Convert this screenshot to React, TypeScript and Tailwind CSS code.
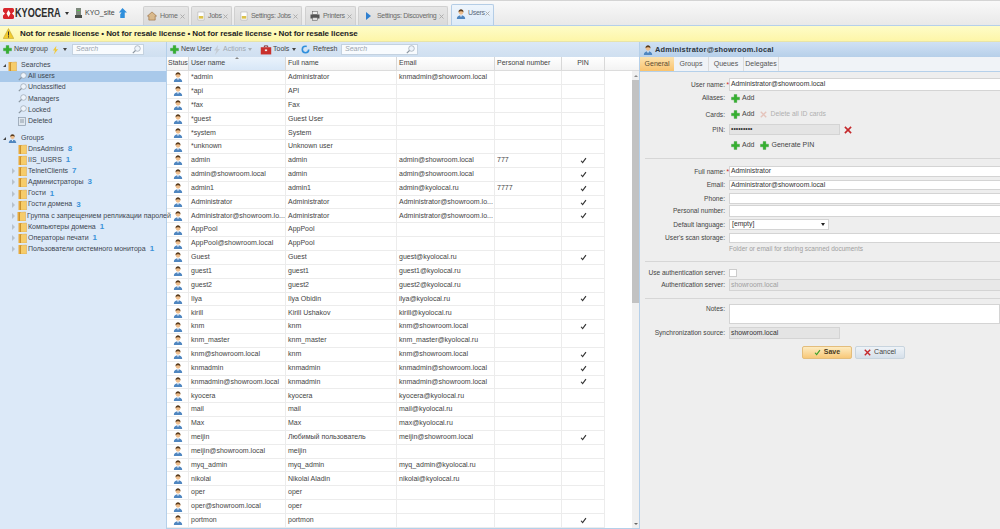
import React from "react";

const F = { fontFamily: '"Liberation Sans", Arial, sans-serif' };

type R = [string, string, string, string, boolean];
const rows: R[] = [
  ["*admin", "Administrator", "knmadmin@showroom.local", "", false],
  ["*api", "API", "", "", false],
  ["*fax", "Fax", "", "", false],
  ["*guest", "Guest User", "", "", false],
  ["*system", "System", "", "", false],
  ["*unknown", "Unknown user", "", "", false],
  ["admin", "admin", "admin@showroom.local", "777", true],
  ["admin@showroom.local", "admin", "admin@showroom.local", "", true],
  ["admin1", "admin1", "admin@kyolocal.ru", "7777", true],
  ["Administrator", "Administrator", "Administrator@showroom.lo...", "", true],
  ["Administrator@showroom.lo...", "Administrator", "Administrator@showroom.lo...", "", true],
  ["AppPool", "AppPool", "", "", false],
  ["AppPool@showroom.local", "AppPool", "", "", false],
  ["Guest", "Guest", "guest@kyolocal.ru", "", true],
  ["guest1", "guest1", "guest1@kyolocal.ru", "", false],
  ["guest2", "guest2", "guest2@kyolocal.ru", "", false],
  ["Ilya", "Ilya Obidin", "ilya@kyolocal.ru", "", true],
  ["kirill", "Kirill Ushakov", "kirill@kyolocal.ru", "", false],
  ["knm", "knm", "knm@showroom.local", "", true],
  ["knm_master", "knm_master", "knm_master@kyolocal.ru", "", false],
  ["knm@showroom.local", "knm", "knm@showroom.local", "", true],
  ["knmadmin", "knmadmin", "knmadmin@showroom.local", "", true],
  ["knmadmin@showroom.local", "knmadmin", "knmadmin@showroom.local", "", true],
  ["kyocera", "kyocera", "kyocera@kyolocal.ru", "", false],
  ["mail", "mail", "mail@kyolocal.ru", "", false],
  ["Max", "Max", "max@kyolocal.ru", "", false],
  ["meijin", "Любимый пользователь", "meijin@showroom.local", "", true],
  ["meijin@showroom.local", "meijin", "", "", false],
  ["myq_admin", "myq_admin", "myq_admin@kyolocal.ru", "", false],
  ["nikolai", "Nikolai Aladin", "nikolai@kyolocal.ru", "", false],
  ["oper", "oper", "", "", false],
  ["oper@showroom.local", "oper", "", "", false],
  ["portmon", "portmon", "", "", true],
];

const UserIcon = ({ s = 10 }: { s?: number }) => (
  <svg width={s} height={s} viewBox="0 0 12 12" className="shrink-0">
    <path d="M1 12c0-3 2-4.500 5-4.500s5 1.500 5 4.500z" fill="#4f86c0" />
    <path d="M4.800 7.500 6 10l1.200-2.500z" fill="#fff" />
    <circle cx="6" cy="4" r="2.800" fill="#eebd8c" />
    <path d="M3 4c0-3 1.500-3.800 3-3.800S9 1 9 4C8 2.800 7 2.700 6 2.700S4 2.800 3 4z" fill="#5a3b1c" />
  </svg>
);

const Plus = ({ s = 9 }: { s?: number }) => (
  <svg width={s} height={s} viewBox="0 0 10 10" className="shrink-0">
    <path d="M3.500 0.500h3v3h3v3h-3v3h-3v-3h-3v-3h3z" fill="#35b02f" stroke="#1f8a1d" strokeWidth="0.3" />
  </svg>
);

const Folder = () => (
  <svg width="9" height="10" viewBox="0 0 9 10" className="shrink-0">
    <path d="M0.500 1h3.500v9H0.500z" fill="#e8a93a" />
    <path d="M2.500 1.500 8.500 1v9H2.500z" fill="#f6cc6a" stroke="#d69a32" strokeWidth="0.4" />
    <path d="M2.500 1.500v8.500" stroke="#b67f22" strokeWidth="0.6" />
  </svg>
);

const Lens = () => (
  <svg width="9" height="9" viewBox="0 0 9 9" className="shrink-0">
    <circle cx="5.500" cy="3.500" r="2.800" fill="#eef4fb" stroke="#98a4b0" strokeWidth="0.7" />
    <path d="M3.500 5.500 0.800 8.200" stroke="#8a95a0" strokeWidth="1.100" />
  </svg>
);

const RedX = ({ s = 8, c = "#c5282b" }: { s?: number; c?: string }) => (
  <svg width={s} height={s} viewBox="0 0 9 9" className="shrink-0">
    <path d="M1 1 8 8M8 1 1 8" stroke={c} strokeWidth="1.800" />
  </svg>
);

const Check = ({ c = "#333" }: { c?: string }) => (
  <svg width="7" height="7" viewBox="0 0 8 8">
    <path d="M1.200 4.300 3 6.500 6.800 1.200" fill="none" stroke={c} strokeWidth="1.300" />
  </svg>
);

const X = ({ pos }: { pos: string }) => (
  <svg width="5" height="5" viewBox="0 0 5 5" className={`absolute ${pos}`}>
    <path d="M0.500 0.500l4 4M4.500 0.500l-4 4" stroke="#a8a8a8" strokeWidth="0.9" />
  </svg>
);

const Tab = ({ cls, icon, label, active }: { cls: string; icon: React.ReactNode; label: string; active?: boolean }) => (
  <div
    className={
      active
        ? `${cls} h-[21px] relative flex items-center gap-[2px] bg-gradient-to-b from-[#eef5fc] to-[#dceaf8] border border-b-0 border-[#b4cde6] rounded-t-[2px] text-[7px] tracking-[-0.3px] text-[#5a6a7a]`
        : `${cls} h-[19px] relative flex items-center gap-[2px] bg-gradient-to-b from-[#e6e6e6] to-[#dadada] border border-b-0 border-[#d0d0d0] rounded-t-[2px] text-[7px] tracking-[-0.3px] text-[#6a6a6a]`
    }
  >
    {icon}
    <span className="whitespace-nowrap">{label}</span>
    <X pos={active ? "right-[3px] top-[6px]" : "right-[3px] top-[7px]"} />
  </div>
);

const Search = ({ w }: { w: string }) => (
  <div className={`${w} h-[11px] bg-[#f8fbfe] border border-[#c4d2e0] flex items-center justify-between pl-[3px] pr-[2px] text-[7px] italic text-[#9aa4ae]`}>
    <span>Search</span>
    <Lens />
  </div>
);

const TreeItem = ({ label, n, arrow, selected, icon }: { label: string; n?: string; arrow?: boolean; selected?: boolean; icon: React.ReactNode }) => (
  <div className={`h-[11.100px] flex items-center pl-[17px] relative whitespace-nowrap ${selected ? "bg-[#a9c9ea]" : ""}`}>
    {arrow && <span className="absolute left-[12px] w-0 h-0 border-y-[3px] border-y-transparent border-l-[3px] border-l-[#b8c2cc]" />}
    <span className="w-[10px] flex justify-center">{icon}</span>
    <span className="ml-[1px] text-[7px] text-[#3c4650]">{label}</span>
    {n && <span className="ml-[4px] text-[8px] font-bold text-[#3b93d8]">{n}</span>}
  </div>
);

const Label = ({ text, req }: { text: string; req?: boolean }) => (
  <div className="w-[85px] shrink-0 text-right text-[6.600px] text-[#444] whitespace-nowrap relative">
    {text}
    {req && <span className="absolute right-[-4px] top-0 text-[#c22]">*</span>}
  </div>
);

const Input = ({ w = "w-[272px]", v = "", bg = "bg-white", c = "text-[#333]" }: { w?: string; v?: string; bg?: string; c?: string }) => (
  <div className={`${w} h-full ${bg} ${c} border border-[#d4d4d4] flex items-center pl-[1px] text-[6.800px] whitespace-nowrap`}>{v}</div>
);

const FormRow = ({ h, mt = "", label, req, children }: { h: string; mt?: string; label?: string; req?: boolean; children?: React.ReactNode }) => (
  <div className={`${h} ${mt} flex items-center gap-[4px]`}>
    <Label text={label ?? ""} req={req} />
    <div className="h-full flex items-center gap-[3px] flex-1">{children}</div>
  </div>
);

const Add = ({ label = "Add" }: { label?: string }) => (
  <div className="flex items-center gap-[2px] ml-[2px] text-[7px] text-[#444]">
    <Plus />
    <span>{label}</span>
  </div>
);

const Divider = ({ mt }: { mt: string }) => <div className={`${mt} h-px bg-[#d6d6d6] ml-[5px]`} />;

const cell = "h-full shrink-0 border-r border-[#ececec] flex items-center text-[7px] text-[#444] whitespace-nowrap overflow-hidden";
const head = "h-full shrink-0 border-r border-[#d8d8d8] flex items-center text-[7px] text-[#444] whitespace-nowrap";

export default function App() {
  return (
    <div style={F} className="w-[1000px] h-[529px] overflow-hidden bg-white flex flex-col relative">
      <div className="h-[26px] shrink-0 bg-gradient-to-b from-[#f9f9f9] to-[#e9e9e9] border-t border-t-[#d4d4d4] border-b border-b-[#b5d0ea] flex items-end">
        <div className="w-[143px] h-full flex items-center shrink-0 pl-[3px]">
          <svg width="11" height="11" viewBox="0 0 11 11" className="shrink-0">
            <rect x="0" y="0" width="11" height="11" rx="1.500" fill="#d8262c" />
            <path d="M5.500 2 7.500 5.500 5.500 9 3.500 5.500zM0 3.500 2 5.500 0 7.500zM11 3.500 9 5.500 11 7.500z" fill="#fff" />
          </svg>
          <span className="ml-[1px] w-[47px] inline-block origin-left scale-x-[0.76] text-[12px] text-[#2d2d2d] font-bold whitespace-nowrap">KYOCERA</span>
          <span className="ml-[3px] w-0 h-0 border-x-[2px] border-x-transparent border-t-[3px] border-t-[#333]" />
          <svg width="7" height="10" viewBox="0 0 7 10" className="ml-[6px] shrink-0">
            <rect x="1" y="0" width="5" height="7" fill="#7f8a7e" />
            <rect x="0" y="7" width="7" height="3" fill="#4a4f4a" />
            <rect x="2" y="2" width="3" height="1" fill="#58c04e" />
          </svg>
          <span className="ml-[3px] text-[7px] text-[#444] w-[28px] whitespace-nowrap">KYO_site</span>
          <svg width="9" height="10" viewBox="0 0 10 11" className="ml-[5px] shrink-0">
            <path d="M5 0 10 5H7.500v6h-5V7L4 5H1z" fill="#2f8fdc" />
          </svg>
        </div>
        <div className="flex items-end">
          <Tab cls="w-[46px] pl-[3px]" label="Home" icon={<svg width="10" height="10" viewBox="0 0 11 11" className="mr-[1px]"><path d="M0.500 5.500 5.500 1l5 4.500H9V10H2V5.500z" fill="#d9b98c" stroke="#9a6b3a" strokeWidth="0.7" /></svg>} />
          <Tab cls="w-[41px] ml-[2px] pl-[5px]" label="Jobs" icon={<svg width="8" height="10" viewBox="0 0 9 10" className="mr-[1px]"><path d="M1 0.500h7v9H1z" fill="#fff" stroke="#aaa" strokeWidth="0.6" /><path d="M2 5h5v3H2z" fill="#dcc24a" /></svg>} />
          <Tab cls="w-[68px] ml-[2px] pl-[5px]" label="Settings: Jobs" icon={<svg width="8" height="10" viewBox="0 0 9 10" className="mr-[1px]"><path d="M1 0.500h7v9H1z" fill="#fff" stroke="#aaa" strokeWidth="0.6" /><path d="M2 5h5v3H2z" fill="#dcc24a" /></svg>} />
          <Tab cls="w-[51px] ml-[3px] pl-[4px]" label="Printers" icon={<svg width="10" height="10" viewBox="0 0 10 10" className="mr-[1px]"><rect x="2.500" y="0.500" width="5" height="3" fill="#eee" stroke="#555" strokeWidth="0.5" /><rect x="0.500" y="3.500" width="9" height="4" fill="#555" /><rect x="2.500" y="6.500" width="5" height="3" fill="#ddd" stroke="#555" strokeWidth="0.5" /></svg>} />
          <Tab cls="w-[90px] ml-[2px] pl-[4px]" label="Settings: Discovering" icon={<svg width="10" height="10" viewBox="0 0 10 10" className="mr-[2px]"><path d="M3 1 8 5 3 9z" fill="#2e7fd0" /></svg>} />
          <Tab cls="w-[43px] ml-[3px] pl-[4px] pb-[3px]" active label="Users" icon={<UserIcon />} />
        </div>
      </div>

      <div className="h-[16px] shrink-0 bg-gradient-to-b from-[#fefcc8] to-[#fdf6a8] flex items-center pl-[3px] border-b border-b-[#e8e4a8]">
        <svg width="11" height="11" viewBox="0 0 11 11" className="shrink-0">
          <path d="M5.500 0.500 10.800 10.500H0.200z" fill="#f3cc2e" stroke="#b49a2a" strokeWidth="0.5" />
          <path d="M5.500 3.500v4M5.500 8.300v1.200" stroke="#333" strokeWidth="1" />
        </svg>
        <span className="ml-[6px] text-[8px] tracking-[-0.08px] font-bold text-[#222] whitespace-nowrap">
          Not for resale license • Not for resale license • Not for resale license • Not for resale license
        </span>
      </div>

      <div className="flex-1 flex min-h-0">
        <div className="w-[166px] shrink-0 bg-[#dce9f8] flex flex-col">
          <div className="h-[15px] shrink-0 bg-gradient-to-b from-[#dbe8f6] to-[#cfdff0] flex items-center pl-[3px] text-[7px] text-[#444]">
            <Plus />
            <span className="ml-[2px] w-[33px] whitespace-nowrap">New group</span>
            <svg width="7" height="10" viewBox="0 0 8 10" className="ml-[5px] shrink-0"><path d="M5 0 1 5.500h2.500L2 10l5-6H4.500z" fill="#f0c93a" /></svg>
            <span className="ml-[4px] w-0 h-0 border-x-[2px] border-x-transparent border-t-[3px] border-t-[#444]" />
            <div className="ml-[5px]"><Search w="w-[72px]" /></div>
          </div>
          <div className="h-[3px] shrink-0" />
          <div className="h-[11.100px] flex items-center pl-[3px] text-[7px] text-[#3c4650]">
            <span className="w-0 h-0 border-l-[3px] border-l-transparent border-b-[3px] border-b-[#444]" />
            <span className="ml-[2px]"><Folder /></span>
            <span className="ml-[4px]">Searches</span>
          </div>
          <TreeItem label="All users" selected icon={<Lens />} />
          <TreeItem label="Unclassified" icon={<Lens />} />
          <TreeItem label="Managers" icon={<Lens />} />
          <TreeItem label="Locked" icon={<Lens />} />
          <TreeItem label="Deleted" icon={<svg width="8" height="9" viewBox="0 0 8 9"><rect x="0.500" y="0.500" width="7" height="8" fill="#dfe7ef" stroke="#8a99a8" strokeWidth="0.7" /><path d="M2 3h4M2 5h4" stroke="#6d7c8a" strokeWidth="0.7" /></svg>} />
          <div className="h-[6px] shrink-0" />
          <div className="h-[11.100px] flex items-center pl-[3px] text-[7px] text-[#3c4650]">
            <span className="w-0 h-0 border-l-[3px] border-l-transparent border-b-[3px] border-b-[#444]" />
            <span className="ml-[2px] mr-[1px] flex"><UserIcon s={9} /></span>
            <span className="ml-[3px]">Groups</span>
          </div>
          <TreeItem label="DnsAdmins" n="8" icon={<Folder />} />
          <TreeItem label="IIS_IUSRS" n="1" icon={<Folder />} />
          <TreeItem label="TelnetClients" n="7" arrow icon={<Folder />} />
          <TreeItem label="Администраторы" n="3" arrow icon={<Folder />} />
          <TreeItem label="Гости" n="1" arrow icon={<Folder />} />
          <TreeItem label="Гости домена" n="3" arrow icon={<Folder />} />
          <TreeItem label="Группа с запрещением репликации паролей" arrow icon={<Folder />} />
          <TreeItem label="Компьютеры домена" n="1" arrow icon={<Folder />} />
          <TreeItem label="Операторы печати" n="1" arrow icon={<Folder />} />
          <TreeItem label="Пользователи системного монитора" n="1" arrow icon={<Folder />} />
        </div>

        <div className="w-px shrink-0 bg-[#b5d0ea]" />

        <div className="w-[472px] shrink-0 flex flex-col bg-white border-b border-b-[#b5d0ea]">
          <div className="h-[15px] shrink-0 bg-gradient-to-b from-[#dbe8f6] to-[#cfdff0] flex items-center pl-[3px] text-[7px] text-[#444]">
            <Plus />
            <span className="ml-[2px] w-[29px] whitespace-nowrap">New User</span>
            <svg width="8" height="10" viewBox="0 0 8 10" className="ml-[3px] shrink-0"><path d="M5 0 1 5.500h2.500L2 10l5-6H4.500z" fill="#c4ccd4" /></svg>
            <span className="ml-[2px] text-[#a0a8b0] w-[24px] whitespace-nowrap">Actions</span>
            <span className="ml-[1px] w-0 h-0 border-x-[2px] border-x-transparent border-t-[3px] border-t-[#a8b0b8]" />
            <svg width="12" height="10" viewBox="0 0 10 9" className="ml-[8px] shrink-0"><path d="M3.500 2V0.800h3V2" fill="none" stroke="#7a2020" strokeWidth="0.8" /><rect x="0.300" y="2" width="9.400" height="6.500" fill="#c9302c" /><rect x="4" y="4" width="2" height="1.500" fill="#eee" /></svg>
            <span className="ml-[1px] w-[16px]">Tools</span>
            <span className="ml-[3px] w-0 h-0 border-x-[2px] border-x-transparent border-t-[3px] border-t-[#444]" />
            <svg width="9" height="9" viewBox="0 0 9 9" className="ml-[5px] shrink-0"><circle cx="4.500" cy="4.500" r="3.200" fill="none" stroke="#2f8fdc" strokeWidth="1.600" strokeDasharray="16 4" /></svg>
            <span className="ml-[3px] w-[22px]">Refresh</span>
            <div className="ml-[6px]"><Search w="w-[77px]" /></div>
          </div>
          <div className="h-[14px] shrink-0 flex bg-gradient-to-b from-white to-[#f3f3f3] border-b border-b-[#dcdcdc]">
            <div className={`${head} w-[22px] pl-[1px] overflow-hidden`}>Status</div>
            <div className={`${head} w-[97px] pl-[2px] bg-gradient-to-b from-[#eaf3fc] to-[#d8e7f7] relative`}>
              User name
              <span className="absolute left-[46px] top-0 w-0 h-0 border-x-[2px] border-x-transparent border-b-[2px] border-b-[#888]" />
            </div>
            <div className={`${head} w-[111px] pl-[2px]`}>Full name</div>
            <div className={`${head} w-[98px] pl-[2px]`}>Email</div>
            <div className={`${head} w-[67px] pl-[2px]`}>Personal number</div>
            <div className={`${head} w-[43px] justify-center`}>PIN</div>
          </div>
          <div className="flex-1 flex min-h-0">
            <div className="w-[465px] shrink-0 overflow-hidden">
              {rows.map((r) => (
                <div key={r[0]} className="h-[13.850px] flex border-b border-b-[#ececec] w-[438px]">
                  <div className={`${cell} w-[22px] justify-center`}><UserIcon /></div>
                  <div className={`${cell} w-[97px] pl-[2px]`}>{r[0]}</div>
                  <div className={`${cell} w-[111px] pl-[2px]`}>{r[1]}</div>
                  <div className={`${cell} w-[98px] pl-[2px]`}>{r[2]}</div>
                  <div className={`${cell} w-[67px] pl-[2px]`}>{r[3]}</div>
                  <div className={`${cell} w-[43px] justify-center`}>{r[4] && <Check />}</div>
                </div>
              ))}
            </div>
            <div className="w-[7px] shrink-0 bg-[#f0f0f0] flex flex-col items-center">
              <span className="mt-[4px] w-0 h-0 border-x-[2px] border-x-transparent border-b-[2px] border-b-[#888]" />
              <div className="mt-[3px] w-full h-[223px] bg-[#c2c2c2]" />
              <span className="mt-auto mb-[3px] w-0 h-0 border-x-[2px] border-x-transparent border-t-[2px] border-t-[#666]" />
            </div>
          </div>
        </div>

        <div className="w-px shrink-0 bg-[#b5d0ea]" />

        <div className="flex-1 bg-[#eeeeee] flex flex-col min-w-0">
          <div className="h-[15px] shrink-0 bg-gradient-to-b from-[#d0e1f3] via-[#c3d8ef] to-[#b6cfe9] flex items-center pl-[3px]">
            <UserIcon />
            <span className="ml-[2px] text-[7.400px] font-bold text-[#2c3540] tracking-[0.25px] whitespace-nowrap">Administrator@showroom.local</span>
          </div>
          <div className="h-[15px] shrink-0 flex bg-[#f0f3f7] border-b border-b-[#b5d0ea] text-[7px] text-[#555]">
            <div className="w-[34px] h-full flex items-center justify-center bg-gradient-to-b from-[#fde3ae] to-[#f9c36e] text-[#5a4a30]">General</div>
            <div className="w-[35px] h-full flex items-center justify-center border-r border-[#dcdcdc]">Groups</div>
            <div className="w-[35px] h-full flex items-center justify-center border-r border-[#dcdcdc]">Queues</div>
            <div className="w-[35px] h-full flex items-center justify-center border-r border-[#dcdcdc]">Delegates</div>
          </div>
          <div className="flex flex-col pt-[6px]">
            <FormRow h="h-[13px]" label="User name:" req><Input v="Administrator@showroom.local" /></FormRow>
            <FormRow h="h-[14px]" label="Aliases:"><Add /></FormRow>
            <FormRow h="h-[19px]" label="Cards:">
              <Add />
              <div className="flex items-center gap-[3px] ml-[3px] text-[6.800px] text-[#b0b0b0] whitespace-nowrap"><RedX s={7} c="#e5c4bc" /><span>Delete all ID cards</span></div>
            </FormRow>
            <FormRow h="h-[11px]" label="PIN:">
              <Input w="w-[111px]" bg="bg-[#e4e4e4]" v="•••••••••" />
              <span className="ml-[1px]"><RedX /></span>
            </FormRow>
            <FormRow h="h-[20px]">
              <Add />
              <span className="ml-[1px]"><Add label="Generate PIN" /></span>
            </FormRow>
            <Divider mt="mt-[3px]" />
            <FormRow h="h-[11px]" mt="mt-[7px]" label="Full name:" req><Input v="Administrator" /></FormRow>
            <FormRow h="h-[10px]" mt="mt-[3px]" label="Email:"><Input v="Administrator@showroom.local" /></FormRow>
            <FormRow h="h-[11px]" mt="mt-[3px]" label="Phone:"><Input /></FormRow>
            <FormRow h="h-[12px]" mt="mt-[1px]" label="Personal number:"><Input /></FormRow>
            <FormRow h="h-[11px]" mt="mt-[2px]" label="Default language:">
              <div className="w-[100px] h-full bg-white border border-[#d4d4d4] flex items-center justify-between pl-[2px] pr-[3px] text-[6.800px] text-[#333]">
                <span>[empty]</span>
                <span className="w-0 h-0 border-x-[2px] border-x-transparent border-t-[3px] border-t-[#222]" />
              </div>
            </FormRow>
            <FormRow h="h-[10px]" mt="mt-[3px]" label="User's scan storage:"><Input /></FormRow>
            <div className="h-[12px] flex items-center pl-[89px] text-[6.500px] text-[#a0a0a0] whitespace-nowrap">Folder or email for storing scanned documents</div>
            <Divider mt="mt-[6px]" />
            <FormRow h="h-[9px]" mt="mt-[6px]" label="Use authentication server:">
              <div className="w-[8px] h-[8px] bg-white border border-[#ccc]" />
            </FormRow>
            <FormRow h="h-[12px]" mt="mt-[2px]" label="Authentication server:"><Input bg="bg-[#e8e8e8]" c="text-[#a0a0a0]" v="showroom.local" /></FormRow>
            <Divider mt="mt-[7px]" />
            <div className="h-[20px] mt-[5px] flex items-start gap-[4px]">
              <Label text="Notes:" />
              <Input />
            </div>
            <FormRow h="h-[12px]" mt="mt-[3px]" label="Synchronization source:"><Input w="w-[111px]" bg="bg-[#e4e4e4]" v="showroom.local" /></FormRow>
            <div className="h-[13px] mt-[7px] flex pl-[162px] gap-[3px] text-[7px]">
              <div className="w-[50px] h-full rounded-[2px] border border-[#e3bd7c] bg-gradient-to-b from-[#fdebc0] to-[#f8c878] flex items-center justify-center gap-[3px] font-bold text-[#4a3a20]">
                <Check c="#3aa02a" /><span>Save</span>
              </div>
              <div className="w-[50px] h-full rounded-[2px] border border-[#c8d4de] bg-gradient-to-b from-[#eef3f8] to-[#d6e0ea] flex items-center justify-center gap-[3px] text-[#444]">
                <RedX s={7} /><span>Cancel</span>
              </div>
            </div>
          </div>
        </div>
      </div>
    </div>
  );
}
